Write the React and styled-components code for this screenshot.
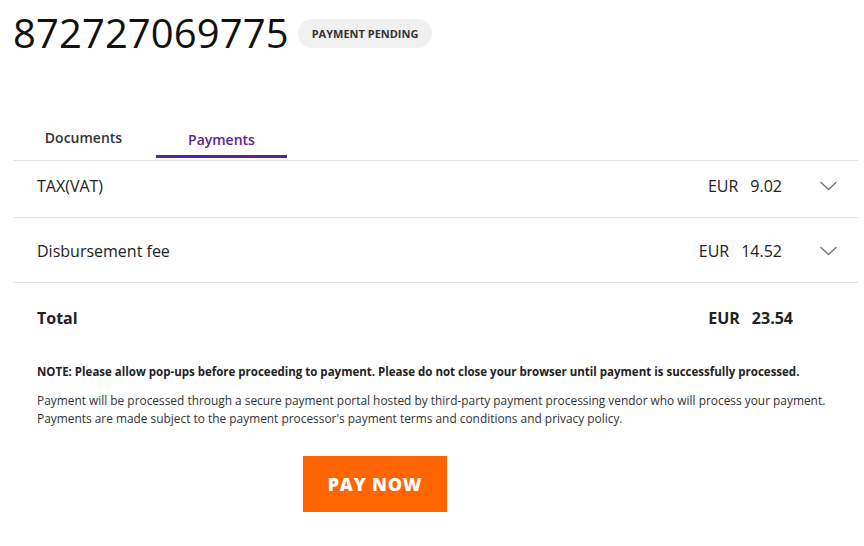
import { styled, createGlobalStyle } from "styled-components";

const GlobalStyle = createGlobalStyle`
  body {
    margin: 0;
    background: #fff;
    font-family: "Open Sans", "Noto Sans", sans-serif;
    color: #222;
  }
`;

const charges = [
  { label: "TAX(VAT)", amount: "9.02", tall: false },
  { label: "Disbursement fee", amount: "14.52", tall: true },
];

function Chevron() {
  return (
    <svg width="17" height="10" viewBox="0 0 17 10" fill="none">
      <path d="M1 1.5L8.5 8.5L16 1.5" stroke="#777" strokeWidth="1.4" strokeLinecap="round" strokeLinejoin="round" />
    </svg>
  );
}

export default function App() {
  return (
    <Page>
      <GlobalStyle />
      <Header>
        <Title>872727069775</Title>
        <Badge>Payment Pending</Badge>
      </Header>

      <Tabs>
        <Tab>Documents</Tab>
        <Tab $active>Payments</Tab>
      </Tabs>

      <List>
        {charges.map(c => (
          <Row key={c.label} $tall={c.tall}>
            <Label>{c.label}</Label>
            <Amount>
              <span>EUR</span>
              <span>{c.amount}</span>
            </Amount>
            <Toggle>
              <Chevron />
            </Toggle>
          </Row>
        ))}
        <TotalRow>
          <Label $bold>Total</Label>
          <Amount $bold>
            <span>EUR</span>
            <span>23.54</span>
          </Amount>
        </TotalRow>
      </List>

      <Notes>
        <Note>
          NOTE: Please allow pop-ups before proceeding to payment. Please do not close your browser
          until payment is successfully processed.
        </Note>
        <Text>
          Payment will be processed through a secure payment portal hosted by third-party payment
          processing vendor who will process your payment.
          <br />
          Payments are made subject to the payment processor's payment terms and conditions and
          privacy policy.
        </Text>
      </Notes>

      <PayButton>Pay Now</PayButton>
    </Page>
  );
}

const Page = styled.div`
  width: 845px;
  padding: 8px 6px 0 13px;
`;

const Header = styled.div`
  display: flex;
  align-items: center;
  gap: 9px;
`;

const Title = styled.h1`
  margin: 0;
  font-size: 40px;
  font-weight: 400;
  line-height: 50px;
  color: #111;
  letter-spacing: 0.1px;
`;

const Badge = styled.span`
  display: inline-flex;
  align-items: center;
  height: 29px;
  padding: 0 14px;
  border-radius: 15px;
  background: #f0f0f0;
  color: #333;
  font-size: 11px;
  font-weight: 700;
  text-transform: uppercase;
  margin-top: 1px;
`;

const Tabs = styled.div`
  display: flex;
  gap: 7px;
  margin-top: 62px;
  padding-left: 5px;
`;

const Tab = styled.div`
  width: 131px;
  text-align: center;
  padding: 8px 0 8px;
  font-size: 14px;
  font-weight: 600;
  color: ${p => (p.$active ? "#5b2396" : "#333")};
  border-bottom: 3px solid ${p => (p.$active ? "#5b2396" : "transparent")};
  line-height: 19px;
  ${p => p.$active && "padding-top: 10px; padding-bottom: 6px;"}
`;

const List = styled.div`
  border-top: 1px solid #e3e3e3;
  margin-top: 2px;
`;

const Row = styled.div`
  box-sizing: border-box;
  display: flex;
  align-items: center;
  height: ${p => (p.$tall ? "65px" : "57px")};
  padding: ${p => (p.$tall ? "2px 0 0" : "0 0 6px")} 24px;
  border-bottom: 1px solid #e3e3e3;
`;

const TotalRow = styled.div`
  display: flex;
  align-items: center;
  height: 70px;
  padding: 0 65px 0 24px;
`;

const Label = styled.div`
  flex: 1;
  font-size: 16px;
  font-weight: ${p => (p.$bold ? 700 : 400)};
  color: #222;
`;

const Amount = styled.div`
  display: flex;
  gap: 12px;
  font-size: 16px;
  font-weight: ${p => (p.$bold ? 700 : 400)};
  color: #222;
`;

const Toggle = styled.div`
  width: 76px;
  display: flex;
  justify-content: center;
  padding-left: 16px;
  box-sizing: border-box;
`;

const Notes = styled.div`
  padding-left: 24px;
  margin-top: 10px;
`;

const Note = styled.p`
  margin: 0 0 10px;
  font-size: 11.5px;
  font-weight: 700;
  line-height: 18px;
  color: #222;
`;

const Text = styled.p`
  margin: 0;
  font-size: 11.9px;
  line-height: 18px;
  color: #333;
`;

const PayButton = styled.button`
  display: block;
  margin: 29px 0 0 290px;
  width: 144px;
  height: 56px;
  border: none;
  background: #ff6500;
  color: #fff;
  font-family: "Open Sans", sans-serif;
  font-size: 18px;
  font-weight: 800;
  letter-spacing: 0.8px;
  text-transform: uppercase;
  cursor: pointer;
`;
